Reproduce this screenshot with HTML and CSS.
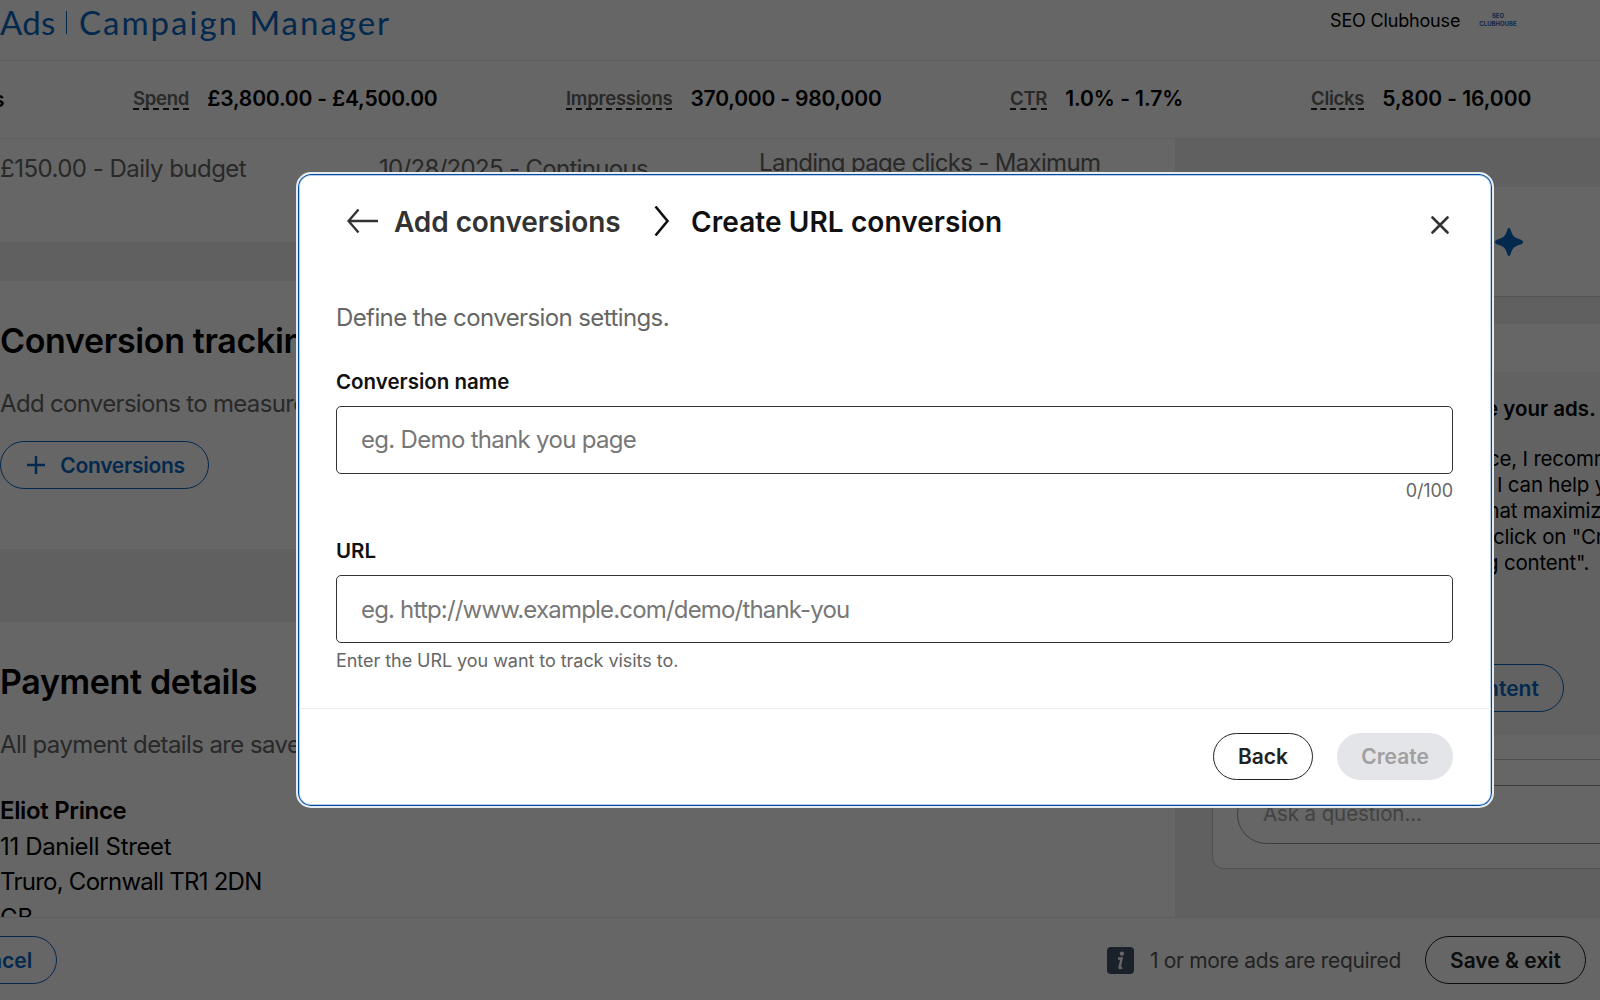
FILE: index.html
```html
<!DOCTYPE html>
<html lang="en">
<head>
    <meta charset="UTF-8">
    <meta name="viewport" content="width=device-width, initial-scale=1.0">
    <title>Campaign Manager</title>
    <link rel="stylesheet" href="styles.css">
</head>
<body>
    <div class="page">
        <header class="topbar">
            <div class="brand">
                <span class="brand-ads">Ads</span>
                <span class="brand-line"></span>
                <span class="brand-name">Campaign Manager</span>
            </div>
            <div class="account">
                <span class="account-name">SEO Clubhouse</span>
                <span class="account-logo">SEO<br>CLUBHOUSE</span>
            </div>
        </header>

        <div class="forecast">
            <span class="forecast-title">s</span>
            <div class="metric metric-spend"><span class="metric-label">Spend</span><b>£3,800.00 - £4,500.00</b></div>
            <div class="metric metric-impressions"><span class="metric-label">Impressions</span><b>370,000 - 980,000</b></div>
            <div class="metric metric-ctr"><span class="metric-label">CTR</span><b>1.0% - 1.7%</b></div>
            <div class="metric metric-clicks"><span class="metric-label">Clicks</span><b>5,800 - 16,000</b></div>
        </div>

        <div class="content">
            <main class="main">
                <section class="summary">
                    <div class="summary-budget">£150.00 - Daily budget</div>
                    <div class="summary-schedule">10/28/2025 - Continuous</div>
                    <div class="summary-goal">Landing page clicks - Maximum</div>
                </section>
                <section class="tracking">
                    <h2>Conversion tracking</h2>
                    <p class="text-tracking">Add conversions to measure</p>
                    <button class="btn btn-blue btn-conversions">
                        <svg width="18" height="18" viewBox="0 0 18 18"><path d="M9 0v18M0 9h18" stroke="currentColor" stroke-width="2.4"/></svg>
                        <span>Conversions</span>
                    </button>
                </section>
                <section class="payment">
                    <h2>Payment details</h2>
                    <p class="text-payment">All payment details are saved</p>
                    <address class="address">
                        <b>Eliot Prince</b><br>
                        <span class="street">11 Daniell Street</span><br>
                        <span class="town">Truro, Cornwall TR1 2DN</span><br>
                        <span>GB</span>
                    </address>
                </section>
            </main>

            <aside class="assistant">
                <div class="assistant-head">
                    <svg width="30" height="30" viewBox="0 0 30 30"><path d="M15 1c.9 0 1.3.7 1.6 1.7 1.7 6 3.7 8 9.7 9.7 1.7.5 2.7 1.3 2.7 2.6s-1 2.1-2.7 2.6c-6 1.7-8 3.7-9.7 9.7-.3 1-.7 1.7-1.6 1.7s-1.3-.7-1.6-1.7c-1.7-6-3.7-8-9.7-9.7C2 17.1 1 16.3 1 15s1-2.1 2.7-2.6c6-1.7 8-3.7 9.7-9.7C13.7 1.7 14.1 1 15 1z" fill="#0a66c2"/></svg>
                </div>
                <div class="assistant-bar"></div>
                <div class="message">
                    <p class="message-title">e your ads.</p>
                    <p class="message-text">
                        <span class="line-1">ce, I recommend</span>
                        <span class="line-2">I can help you</span>
                        <span class="line-3">that maximizes</span>
                        <span class="line-4">click on "Create</span>
                        <span class="line-5">g content".</span>
                    </p>
                    <button class="btn btn-blue btn-content">Create content</button>
                </div>
                <div class="composer">
                    <div class="composer-box">
                        <div class="ask">Ask a question...</div>
                    </div>
                </div>
            </aside>
        </div>

        <footer class="footer">
            <button class="btn btn-blue btn-cancel">Cancel</button>
            <div class="footer-right">
                <svg class="info" width="27" height="27" viewBox="0 0 27 27">
                    <rect width="27" height="27" rx="4" fill="#44546a"/>
                    <circle cx="14.9" cy="6.6" r="2.2" fill="#fff"/>
                    <path d="M11 11.5h3.6l-2 8.7c-.2 1 .5 1.3 2.6.3" fill="none" stroke="#fff" stroke-width="2.4"/>
                </svg>
                <span class="required">1 or more ads are required</span>
                <button class="btn btn-save">Save &amp; exit</button>
            </div>
        </footer>
    </div>

    <div class="backdrop">
        <div class="modal">
            <div class="modal-head">
                <svg class="arrow" width="32" height="26" viewBox="0 0 32 26"><path d="M31 13H2M11.5 1.5L1.5 13l10 11.5" fill="none" stroke="#333" stroke-width="2.4"/></svg>
                <span class="crumb">Add conversions</span>
                <svg class="chevron" width="16" height="30" viewBox="0 0 16 30"><path d="M1.5.5L13.5 15l-12 14.5" fill="none" stroke="#111" stroke-width="2.6"/></svg>
                <span class="modal-title">Create URL conversion</span>
                <svg class="close" width="18" height="18" viewBox="0 0 18 18"><path d="M1.5 1.5l15 15M16.5 1.5l-15 15" stroke="#333" stroke-width="2.6" stroke-linecap="round"/></svg>
            </div>
            <div class="modal-body">
                <p class="intro">Define the conversion settings.</p>
                <label class="label-name" for="name">Conversion name</label>
                <input class="input input-name" id="name" type="text" placeholder="eg. Demo thank you page">
                <div class="counter">0/100</div>
                <label class="label-url" for="url">URL</label>
                <input class="input input-url" id="url" type="text" placeholder="eg. http://www.example.com/demo/thank-you">
                <div class="hint">Enter the URL you want to track visits to.</div>
            </div>
            <div class="modal-foot">
                <button class="btn btn-back">Back</button>
                <button class="btn btn-create" disabled>Create</button>
            </div>
        </div>
    </div>
</body>
</html>
```
FILE: styles.css
```css
* {
    box-sizing: border-box;
}
body {
    margin: 0;
    font-family: Inter, "Liberation Sans", sans-serif;
    color: #000;
    overflow: hidden;
}
h2, p {
    margin: 0;
}
svg {
    display: block;
    flex: none;
}
.page {
    display: flex;
    flex-direction: column;
    height: 1000px;
    background: #fff;
    white-space: nowrap;
}

/* buttons */
.btn {
    display: inline-flex;
    align-items: center;
    justify-content: center;
    height: 48px;
    padding: 0;
    border: 1.5px solid #222;
    border-radius: 24px;
    background: none;
    font-family: inherit;
    font-size: 21px;
    font-weight: 600;
    color: #222;
    white-space: nowrap;
}
.btn-blue {
    border-color: #0a66c2;
    color: #0a66c2;
}

/* top bar */
.topbar {
    display: flex;
    justify-content: space-between;
    height: 61px;
    border-bottom: 1px solid #e8e8e8;
}
.brand {
    display: flex;
    font-family: Lato, sans-serif;
    font-size: 33px;
    line-height: 44px;
    color: #0a66c2;
}
.brand-ads {
    width: 66px;
    letter-spacing: 0.3px;
}
.brand-line {
    width: 1px;
    height: 23px;
    margin: 11px 12px 0 0;
    background: #0a66c2;
}
.brand-name {
    letter-spacing: 2px;
}
.account {
    display: flex;
    width: 270px;
    line-height: 41px;
    font-size: 18px;
    letter-spacing: -0.17px;
}
.account-name {
    width: 149px;
}
.account-logo {
    width: 38px;
    padding-top: 12px;
    font-size: 6px;
    line-height: 8px;
    font-weight: 700;
    letter-spacing: 0;
    text-align: center;
    color: #1f5fb5;
}

/* forecast */
.forecast {
    display: flex;
    height: 78px;
    line-height: 76px;
    border-bottom: 1px solid #ededed;
    font-size: 21px;
    letter-spacing: -0.18px;
}
.forecast-title {
    width: 133px;
    font-weight: 600;
    line-height: 78px;
    text-indent: -7px;
}
.metric {
    display: flex;
    align-items: flex-start;
}
.metric b {
    font-weight: 600;
}
.metric-label {
    height: 23px;
    margin: 26px 18px 0 0;
    border-bottom: 2px dashed #222;
    font-size: 18.5px;
    line-height: 22px;
    font-weight: 600;
    letter-spacing: -0.25px;
    color: #666;
}
.metric-spend {
    width: 433px;
}
.metric-impressions {
    width: 444px;
}
.metric-ctr {
    width: 301px;
}
.metric-ctr b,
.metric-clicks b {
    letter-spacing: -0.05px;
}

/* campaign column */
.content {
    display: flex;
    height: 778px;
    overflow: hidden;
}
.main {
    width: 1175px;
    background: #f0f0f0;
}
.summary {
    display: flex;
    height: 103px;
    padding-top: 15px;
    background: #fff;
    font-size: 24px;
    line-height: 30px;
    letter-spacing: -0.68px;
    color: #666;
}
.summary-budget {
    width: 379px;
    letter-spacing: -0.52px;
}
.summary-schedule {
    width: 380px;
}
.summary-goal {
    margin-top: -6px;
}
.tracking {
    height: 268px;
    margin-top: 39px;
    padding-top: 38px;
    background: #fff;
}
h2 {
    font-size: 34px;
    line-height: 44px;
    font-weight: 600;
    letter-spacing: -0.34px;
}
.text-tracking,
.text-payment {
    margin-top: 25px;
    font-size: 24px;
    line-height: 32px;
    letter-spacing: -0.6px;
    color: #666;
}
.text-tracking {
    letter-spacing: -0.68px;
}
.btn-conversions {
    width: 209px;
    margin-top: 21px;
    padding-left: 3px;
    gap: 15px;
    letter-spacing: -0.3px;
}
.payment {
    height: 295px;
    margin-top: 73px;
    padding-top: 38px;
    background: #fff;
}
.address {
    margin-top: 32px;
    font-size: 24px;
    line-height: 35.5px;
    font-style: normal;
    letter-spacing: -0.35px;
}
.address b {
    font-weight: 600;
}
.town {
    letter-spacing: -0.74px;
}

/* assistant column */
.assistant {
    width: 425px;
    padding-top: 48px;
    background: #f0f0f0;
    font-size: 20.5px;
}
.assistant-head {
    height: 110px;
    padding: 40px 0 0 319px;
    border-bottom: 1px solid #d0d0d0;
    background: #fff;
}
.assistant-bar {
    height: 48px;
    margin-top: 27px;
    background: #fff;
}
.message {
    height: 363px;
    padding-top: 23px;
    background: #f5f5f5;
}
.message-title {
    padding-left: 311px;
    font-weight: 600;
    line-height: 28px;
}
.message-text {
    display: flex;
    flex-direction: column;
    margin-top: 23px;
    line-height: 26px;
    letter-spacing: -0.2px;
}
.line-1 {
    padding-left: 313px;
}
.line-2 {
    padding-left: 322px;
}
.line-3 {
    padding-left: 306px;
}
.line-4 {
    padding-left: 318px;
}
.line-5 {
    padding-left: 311px;
}
.btn-content {
    width: 210px;
    margin: 88px 0 0 179px;
    padding-left: 9px;
}
.composer {
    width: 425px;
    height: 134px;
    margin-left: 37px;
    border: 1px solid #c4c4c4;
    border-top: 0;
    border-radius: 0 0 12px 12px;
    background: #fff;
    padding-top: 24px;
}
.composer-box {
    padding: 25px 0 0 24px;
    border-top: 1px solid #c4c4c4;
}
.ask {
    height: 59px;
    padding-left: 25px;
    border: 1px solid #999;
    border-radius: 30px;
    font-size: 20.5px;
    line-height: 56px;
    letter-spacing: -0.1px;
    color: #a5a5a5;
}

/* footer */
.footer {
    display: flex;
    justify-content: space-between;
    height: 83px;
    padding: 18px 14px 0 0;
    border-top: 1px solid #e8e8e8;
    background: #fff;
}
.btn-cancel {
    width: 120px;
    margin-left: -63px;
}
.footer-right {
    display: flex;
    height: 48px;
    align-items: center;
}
.required {
    width: 275px;
    margin-left: 16px;
    font-size: 21px;
    letter-spacing: -0.33px;
    color: #555;
}
.btn-save {
    width: 161px;
}

/* dialog */
.backdrop {
    position: absolute;
    top: 0;
    left: 0;
    width: 1600px;
    height: 1000px;
    padding: 172px 0 0 296px;
    background: rgba(0, 0, 0, 0.6);
}
.modal {
    display: flex;
    flex-direction: column;
    width: 1198px;
    height: 636px;
    border: 2px solid #e6ebf0;
    border-radius: 15px;
    background: #fff;
    box-shadow: inset 0 0 0 1px #004b9b, inset 0 0 0 2px #b4cdea;
}
.modal-head {
    display: flex;
    height: 110px;
    padding: 30px 43px 0 49px;
    font-size: 28px;
    line-height: 36px;
    font-weight: 600;
    color: #111;
}
.arrow {
    margin-top: 4px;
}
.crumb {
    width: 260px;
    margin-left: 15px;
    letter-spacing: -0.08px;
    color: #333;
}
.chevron {
    margin-top: 2px;
}
.modal-title {
    flex: 1;
    margin-left: 21px;
    letter-spacing: 0.08px;
}
.close {
    margin-top: 12px;
}
.modal-body {
    display: flex;
    flex-direction: column;
    height: 424px;
    padding: 17px 39px 0 38px;
}
.intro {
    font-size: 24px;
    line-height: 34px;
    letter-spacing: -0.6px;
    color: #666;
}
.label-name,
.label-url {
    margin-top: 33px;
    font-size: 20.5px;
    line-height: 28px;
    font-weight: 600;
    color: #111;
}
.input {
    height: 68px;
    margin-top: 10px;
    padding: 0 24px 1px;
    border: 1px solid #333;
    border-radius: 5px;
    font-family: inherit;
    font-size: 24px;
}
.input::placeholder {
    color: #777;
    opacity: 1;
}
.input-name {
    letter-spacing: -0.69px;
}
.input-url {
    padding: 1px 24px 0;
    letter-spacing: -0.82px;
}
.counter {
    margin-top: 4px;
    font-size: 18px;
    line-height: 26px;
    letter-spacing: -0.1px;
    text-align: right;
    color: #666;
}
.hint {
    margin-top: 5px;
    font-size: 18px;
    line-height: 26px;
    letter-spacing: -0.05px;
    color: #666;
}
.modal-foot {
    display: flex;
    justify-content: flex-end;
    gap: 24px;
    margin: 0 1px;
    padding: 24px 38px 0 0;
    border-top: 1px solid #e8ebf0;
}
.modal-foot .btn {
    height: 47px;
}
.btn-back {
    width: 100px;
}
.btn-create {
    width: 116px;
    border: 0;
    background: #e3e5e8;
    color: #a0a0a0;
}
```
